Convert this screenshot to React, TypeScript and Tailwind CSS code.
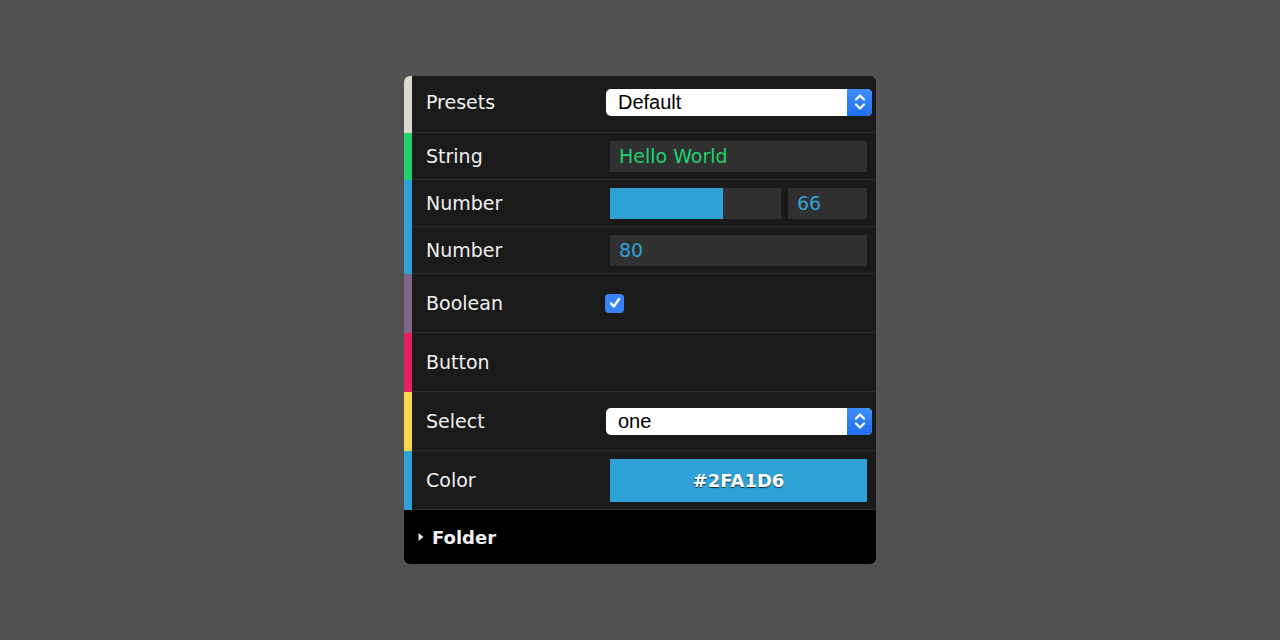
const LABEL_FONT = { fontFamily: '"DejaVu Sans", "Liberation Sans", sans-serif' };

function Row({
  color,
  label,
  height,
  lift,
  children,
}: {
  color: string;
  label: string;
  height: string;
  lift?: boolean;
  children?: React.ReactNode;
}) {
  return (
    <div className={`flex ${height}`}>
      <div className={`w-[8px] shrink-0 ${color}`} />
      <div
        className={`flex flex-1 items-center border-b border-[#2c2c2c] bg-[#1a1a1a] ${lift ? "pb-[4px]" : ""}`}
      >
        <div className="w-[194px] shrink-0 pl-[14px] text-[19px] text-[#f0f0f0]">{label}</div>
        <div className="flex flex-1 items-center pr-[4px]">{children}</div>
      </div>
    </div>
  );
}

function SelectBox({ value }: { value: string }) {
  return (
    <div className="flex h-[27px] flex-1 overflow-hidden rounded-[5px] bg-white">
      <div
        className="flex flex-1 items-center pl-[12px] text-[20px] text-black"
        style={{ fontFamily: '"Liberation Sans", Arial, sans-serif' }}
      >
        {value}
      </div>
      <div className="flex w-[25px] items-center justify-center bg-gradient-to-b from-[#3d8efb] to-[#1f6ff0]">
        <svg width="12" height="18" viewBox="0 0 12 18" fill="none" stroke="white" strokeWidth="2.2" strokeLinecap="round" strokeLinejoin="round">
          <path d="M2 6.5 L6 2.5 L10 6.5" />
          <path d="M2 11.5 L6 15.5 L10 11.5" />
        </svg>
      </div>
    </div>
  );
}

export default function App() {
  return (
    <div className="flex h-[640px] w-full justify-center bg-[#515151]" style={LABEL_FONT}>
      <div className="mt-[76px] flex h-[488px] w-[472px] flex-col overflow-hidden rounded-[6px]">
        <Row color="bg-[#dcd8cc]" label="Presets" height="h-[57px]" lift>
          <SelectBox value="Default" />
        </Row>
        <Row color="bg-[#1ed36f]" label="String" height="h-[47px]">
          <div className="mr-[5px] ml-[4px] flex h-[31px] flex-1 items-center bg-[#303030] pl-[9px] text-[19px] text-[#1ed36f]">
            Hello World
          </div>
        </Row>
        <Row color="bg-[#2fa1d6]" label="Number" height="h-[47px]">
          <div className="mr-[5px] ml-[4px] flex h-[31px] flex-1 gap-[7px]">
            <div className="flex w-[171px] bg-[#303030]">
              <div className="h-full bg-[#2fa1d6]" style={{ width: "66%" }} />
            </div>
            <div className="flex flex-1 items-center bg-[#303030] pl-[9px] text-[19px] text-[#2fa1d6]">66</div>
          </div>
        </Row>
        <Row color="bg-[#2fa1d6]" label="Number" height="h-[47px]">
          <div className="mr-[5px] ml-[4px] flex h-[31px] flex-1 items-center bg-[#303030] pl-[9px] text-[19px] text-[#2fa1d6]">
            80
          </div>
        </Row>
        <Row color="bg-[#806787]" label="Boolean" height="h-[59px]">
          <div className="-ml-[1px] flex h-[19px] w-[19px] items-center justify-center rounded-[4px] bg-[#3a82f7]">
            <svg width="14" height="14" viewBox="0 0 14 14" fill="none" stroke="white" strokeWidth="2.4" strokeLinecap="round" strokeLinejoin="round">
              <path d="M3 7.5 L5.8 10.5 L11 3" />
            </svg>
          </div>
        </Row>
        <Row color="bg-[#e61d5f]" label="Button" height="h-[59px]" />
        <Row color="bg-[#fbd54e]" label="Select" height="h-[59px]">
          <SelectBox value="one" />
        </Row>
        <Row color="bg-[#2fa1d6]" label="Color" height="h-[59px]">
          <div
            className="mr-[5px] ml-[4px] flex h-[43px] flex-1 items-center justify-center bg-[#2fa1d6] text-[18px] font-bold text-white"
            style={{ textShadow: "0 1px 1px rgba(0,0,0,0.7)" }}
          >
            #2FA1D6
          </div>
        </Row>
        <div className="flex flex-1 items-center bg-black pl-[14px]">
          <svg width="6" height="10" viewBox="0 0 6 10" className="mr-[8px]">
            <path d="M0.5 1 L5.5 5 L0.5 9 Z" fill="#e6e6e6" />
          </svg>
          <span className="text-[18px] font-bold text-[#f0f0f0]">Folder</span>
        </div>
      </div>
    </div>
  );
}
